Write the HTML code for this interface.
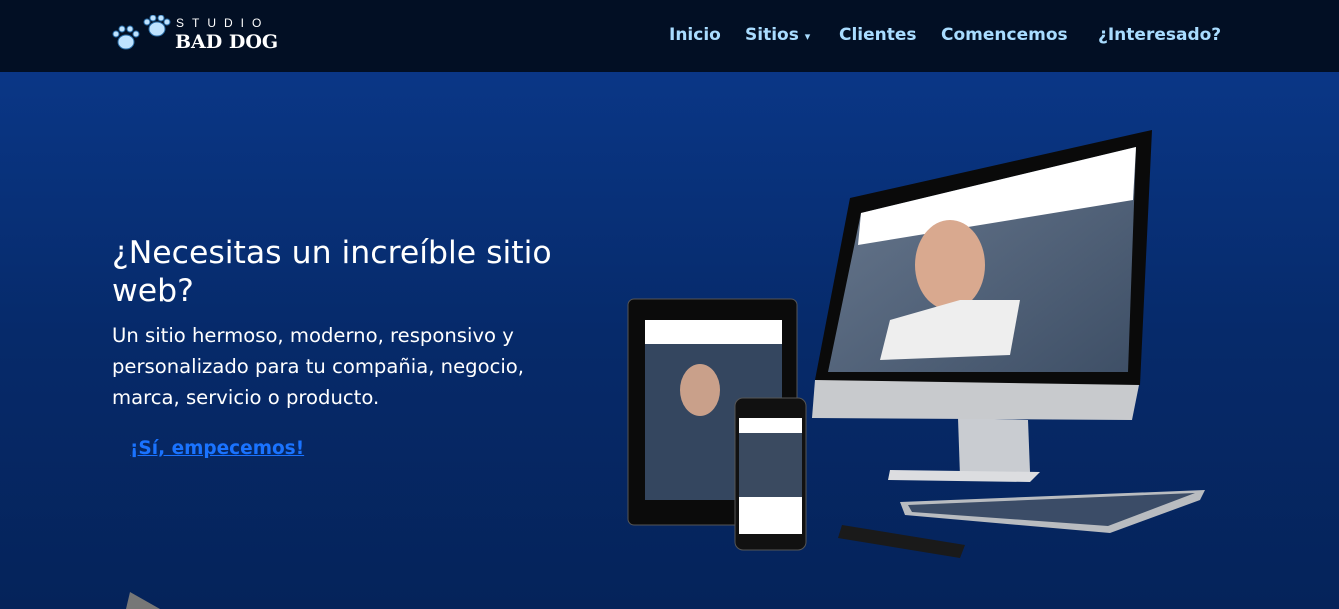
<!DOCTYPE html>
<html><head><meta charset="utf-8"><style>
*{margin:0;padding:0;box-sizing:border-box}
body{width:1339px;height:609px;overflow:hidden;font-family:"DejaVu Sans",sans-serif;background:linear-gradient(#0b3a8e,#062a6a 55%,#05235a)}
nav{position:absolute;top:0;left:0;width:1339px;height:72px;background:#020f24}
.menu{position:absolute;top:25px;font-weight:bold;font-size:17px;color:#a9dcff}
.menu span{position:absolute;white-space:nowrap}
h1{position:absolute;left:112px;top:234px;width:470px;font-weight:normal;font-size:31.5px;line-height:38px;color:#fff}
p{position:absolute;left:112px;top:320px;width:450px;font-size:19.6px;line-height:31px;color:#fff}
a{position:absolute;left:130px;top:438px;font-size:18.5px;font-weight:bold;color:#1a73ff;text-decoration:underline}
</style></head><body>
<nav>
<svg style="position:absolute;left:112px;top:15px" width="60" height="40" viewBox="0 0 60 40">
<g fill="#bfe3ff" stroke="#2b6ea8" stroke-width="1">
<ellipse cx="14" cy="27" rx="8" ry="7"/><circle cx="4" cy="19" r="3"/><circle cx="10" cy="14" r="3"/><circle cx="18" cy="14" r="3"/><circle cx="24" cy="19" r="3"/>
<ellipse cx="45" cy="14" rx="8" ry="7"/><circle cx="35" cy="7" r="3"/><circle cx="41" cy="3" r="3"/><circle cx="49" cy="3" r="3"/><circle cx="55" cy="7" r="3"/>
</g></svg>
<div style="position:absolute;left:176px;top:16px;color:#fff;font-size:12px;letter-spacing:8px;font-family:'Liberation Sans',sans-serif">STUDIO</div>
<div style="position:absolute;left:175px;top:31px;color:#fff;font-size:19px;font-weight:bold;font-family:'DejaVu Serif',serif">BAD DOG</div>
<div class="menu"><span style="left:669px">Inicio</span><span style="left:745px">Sitios <small style="font-size:11px">▾</small></span><span style="left:839px">Clientes</span><span style="left:941px">Comencemos</span><span style="left:1098px">¿Interesado?</span></div>
</nav>
<h1>¿Necesitas un increíble sitio web?</h1>
<p>Un sitio hermoso, moderno, responsivo y personalizado para tu compañia, negocio, marca, servicio o producto.</p>
<a>¡Sí, empecemos!</a>
<svg style="position:absolute;left:0;top:0" width="1339" height="609">
<defs><linearGradient id="sc" x1="0" y1="0" x2="1" y2="1"><stop offset="0" stop-color="#6a7a90"/><stop offset="1" stop-color="#3e4f66"/></linearGradient></defs>
<polygon points="958,418 1028,420 1030,472 960,476" fill="#c9ccd1"/>
<polygon points="890,470 1040,472 1030,482 888,480" fill="#dcdde0"/>
<polygon points="815,380 1140,380 1132,420 812,418" fill="#c8cacd"/>
<polygon points="850,198 1152,130 1140,385 815,380" fill="#0a0a0a"/>
<polygon points="861,213 1136,147 1128,372 828,372" fill="url(#sc)"/>
<polygon points="861,213 1136,147 1133,200 858,245" fill="#fff"/>
<ellipse cx="950" cy="265" rx="35" ry="45" fill="#d9a98f"/>
<polygon points="880,360 1010,355 1020,300 960,300 890,320" fill="#eee"/>
<polygon points="900,502 1205,490 1200,500 1110,533 905,515" fill="#b9bcc0"/>
<polygon points="908,505 1195,493 1108,526 912,512" fill="#3b4c67"/>
<rect x="628" y="299" width="169" height="226" rx="6" fill="#0b0b0b" stroke="#555"/>
<rect x="645" y="320" width="137" height="180" fill="#34465f"/>
<rect x="645" y="320" width="137" height="24" fill="#fff"/>
<ellipse cx="700" cy="390" rx="20" ry="26" fill="#c9a08a"/>
<polygon points="842,525 965,545 960,558 838,538" fill="#1a1a1a"/>
<rect x="735" y="398" width="71" height="152" rx="8" fill="#111" stroke="#555"/>
<rect x="739" y="418" width="63" height="116" fill="#3a4a60"/>
<rect x="739" y="418" width="63" height="15" fill="#fff"/>
<rect x="739" y="497" width="63" height="37" fill="#fff"/>
<polygon points="126,609 130,592 160,609" fill="#777"/>
</svg>
</body></html>
